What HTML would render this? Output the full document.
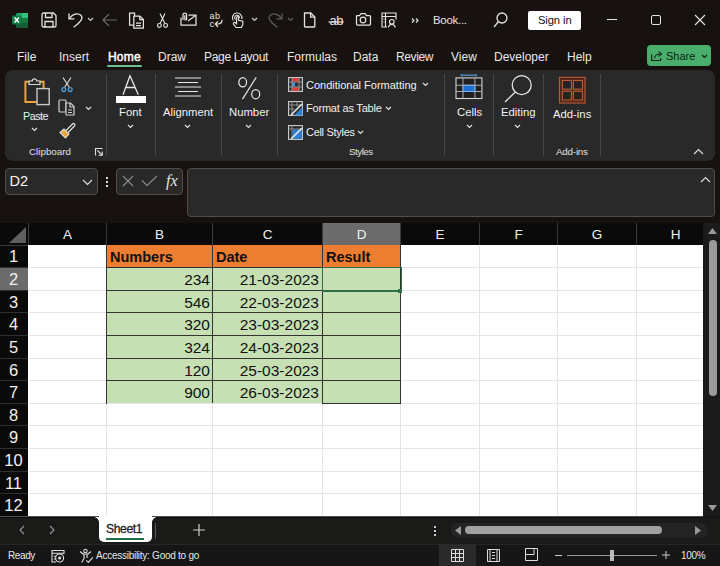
<!DOCTYPE html>
<html><head><meta charset="utf-8">
<style>
*{margin:0;padding:0;box-sizing:border-box}
html,body{width:720px;height:566px;overflow:hidden;background:#17120f;font-family:"Liberation Sans",sans-serif;color:#fff}
.a{position:absolute}
.t{position:absolute;white-space:nowrap;line-height:1}
svg{position:absolute;overflow:visible}
#title{left:0;top:0;width:720px;height:42px;background:#17120f}
.tab{font-size:12px;color:#e8e8e8;top:51px}
#ribbon{left:5px;top:70px;width:710px;height:91px;background:#292929;border-radius:8px}
.sep{position:absolute;width:1px;background:#474747;top:74px;height:82px}
.lbl{font-size:11.3px;color:#f0f0f0}
.glbl{font-size:9.8px;color:#e0e0e0}
.chev{position:absolute}
#fbar{left:0;top:161px;width:720px;height:62px;background:#17120f}
.box{position:absolute;background:#292929;border:1px solid #524c47;border-radius:4px}
#grid{left:0;top:222px;width:703px;height:295px;background:#fff}
.hdr{position:absolute;background:#0a0a0a}
.ch{position:absolute;top:0;height:23px;font-size:14px;color:#f2f2f2;text-align:center;line-height:23px}
.rh{position:absolute;left:0;width:28px;font-size:15px;color:#f2f2f2;text-align:center}
.cell{position:absolute;font-size:15px;color:#111}
</style></head><body>

<!-- TITLE BAR -->
<div id="title" class="a"></div>
<!-- Excel logo -->
<svg style="left:12px;top:12px" width="16" height="16" viewBox="0 0 16 16">
  <rect x="4" y="1" width="12" height="14.5" rx="1.5" fill="#21a366"/>
  <rect x="4" y="5.8" width="12" height="4.8" fill="#107c41"/>
  <path d="M4 10.6h12v3.4a1.5 1.5 0 0 1-1.5 1.5H5.5A1.5 1.5 0 0 1 4 14z" fill="#185c37"/>
  <rect x="10" y="1" width="6" height="4.8" fill="#33c481"/>
  <rect x="0" y="3.5" width="9.5" height="9" rx="1.2" fill="#107c41"/>
  <path d="M2.6 5.6L6.9 10.4M6.9 5.6L2.6 10.4" stroke="#fff" stroke-width="1.5"/>
</svg>
<!-- Save -->
<svg style="left:41px;top:12px" width="16" height="16" viewBox="0 0 16 16" fill="none" stroke="#e4e4e4" stroke-width="1.3">
  <path d="M2.5 1h10l2.5 2.5V13.5a1.5 1.5 0 0 1-1.5 1.5H2.5A1.5 1.5 0 0 1 1 13.5V2.5A1.5 1.5 0 0 1 2.5 1z"/><path d="M4.5 1v4.5h6.5V1"/><path d="M4 15V9.5h8V15"/>
</svg>
<!-- Undo -->
<svg style="left:68px;top:12px" width="16" height="16" viewBox="0 0 16 16" fill="none" stroke="#e4e4e4" stroke-width="1.3" stroke-linecap="round">
  <path d="M1 1.9V6.8H6"/><path d="M1.5 6.3C4.5 2.5 9.5 0.3 12.8 3.2C15.8 6 12.5 10.5 6 15"/>
</svg>
<svg style="left:87px;top:17px" width="7" height="5" viewBox="0 0 7 5" fill="none" stroke="#ccc" stroke-width="1.2"><path d="M1 1l2.5 2.5L6 1"/></svg>
<!-- back arrow gray -->
<svg style="left:102px;top:13px" width="16" height="14" viewBox="0 0 16 14" fill="none" stroke="#6a6a6a" stroke-width="1.2">
  <path d="M1 7h14M7 1L1 7l6 6"/>
</svg>
<!-- copy doc -->
<svg style="left:128px;top:12px" width="17" height="17" viewBox="0 0 17 17" fill="none" stroke="#e4e4e4" stroke-width="1.25">
  <path d="M1.6 1h5v12h-5z"/><path d="M5.8 4h6l3.6 3.6V16H5.8z" fill="#17120f"/><path d="M11.8 4v3.6h3.6M8 11h5M8 13.5h5"/>
</svg>
<!-- scissors -->
<svg style="left:157px;top:13px" width="11" height="15" viewBox="0 0 11 15" fill="none" stroke="#e4e4e4" stroke-width="1.15">
  <path d="M3 0.5L7.8 10.2M8 0.5L3.2 10.2"/><circle cx="2.4" cy="12.4" r="1.9"/><circle cx="8.6" cy="12.4" r="1.9"/>
</svg>
<!-- attach mail -->
<svg style="left:180px;top:12px" width="17" height="14" viewBox="0 0 17 14" fill="none" stroke="#e4e4e4" stroke-width="1.25">
  <path d="M1 5.5V13h15V3H8.5"/><path d="M15.5 3.5L8 9"/><path d="M3 8V2.8a1.8 1.8 0 0 1 3.6 0V7a.9.9 0 0 1-1.8 0V3.2"/>
</svg>
<!-- abc spelling -->
<div class="t" style="left:209.5px;top:11.8px;font-size:9px;color:#e4e4e4;letter-spacing:0.6px">ab</div>
<div class="t" style="left:209.5px;top:18.6px;font-size:9.5px;color:#e4e4e4">c</div>
<svg style="left:214px;top:19px" width="9" height="9" viewBox="0 0 9 9" fill="none" stroke="#e4e4e4" stroke-width="1.2" stroke-linecap="round"><path d="M8 1.2c0 2.5-1.5 3.8-4 3.8H1.4M3.6 2.6L1.3 5l2.3 2.5"/></svg>
<!-- touch -->
<svg style="left:231px;top:12px" width="15" height="17" viewBox="0 0 15 17" fill="none" stroke="#e4e4e4" stroke-width="1.15">
  <path d="M2.2 8.5A4.8 4.8 0 1 1 10.8 7"/><path d="M4.6 7.6A2.4 2.4 0 1 1 8.4 6"/><path d="M5.6 5.5v6.3L4 10.6a1.1 1.1 0 0 0-1.5 1.5L5 15.5h5.5l1.3-3v-3.2l-4.2-1V5.5a1 1 0 0 0-2 0z"/>
</svg>
<svg style="left:251px;top:17px" width="7" height="5" viewBox="0 0 7 5" fill="none" stroke="#ccc" stroke-width="1.2"><path d="M1 1l2.5 2.5L6 1"/></svg>
<!-- redo gray -->
<svg style="left:267px;top:12px" width="16" height="16" viewBox="0 0 16 16" fill="none" stroke="#5c5c5c" stroke-width="1.3" stroke-linecap="round">
  <path d="M15 1.9V6.8H10"/><path d="M14.5 6.3C11.5 2.5 6.5 0.3 3.2 3.2C0.2 6 3.5 10.5 10 15"/>
</svg>
<svg style="left:287px;top:17px" width="7" height="5" viewBox="0 0 7 5" fill="none" stroke="#5c5c5c" stroke-width="1.2"><path d="M1 1l2.5 2.5L6 1"/></svg>
<!-- new doc -->
<svg style="left:303px;top:12px" width="13" height="16" viewBox="0 0 13 16" fill="none" stroke="#e4e4e4" stroke-width="1.3">
  <path d="M1.5 1h6.3l4 4v9.3a.7.7 0 0 1-.7.7H2.2a.7.7 0 0 1-.7-.7z"/><path d="M7.6 1v4.2h4.2"/>
</svg>
<!-- strikethrough ab -->
<div class="t" style="left:329.5px;top:13.7px;font-size:13px;color:#e4e4e4;letter-spacing:-0.4px">ab</div>
<svg style="left:328px;top:20.5px" width="16" height="2" viewBox="0 0 16 2"><path d="M0.5 1h15" stroke="#e4e4e4" stroke-width="1.2"/></svg>
<!-- camera -->
<svg style="left:355px;top:12px" width="16" height="14" viewBox="0 0 16 14" fill="none" stroke="#e4e4e4" stroke-width="1.25">
  <path d="M1.5 3.5h3l1.5-2h4l1.5 2h3a1 1 0 0 1 1 1v7.5a1 1 0 0 1-1 1h-12a1 1 0 0 1-1-1V4.5a1 1 0 0 1 1-1z"/><circle cx="8" cy="8" r="2.8"/>
</svg>
<!-- form -->
<svg style="left:381px;top:12px" width="16" height="16" viewBox="0 0 16 16" fill="none" stroke="#e4e4e4" stroke-width="1.15">
  <path d="M6 15H1V1h14v6.5"/><path d="M1 4.5h14M4.5 1v14M2.5 7h1M2.5 10h1"/><circle cx="10.8" cy="9.8" r="2.3"/><path d="M7.3 15.5c.3-2 1.6-3 3.5-3s3.2 1 3.5 3"/>
</svg>
<svg style="left:411px;top:18px" width="8" height="5" viewBox="0 0 8 5" fill="none" stroke="#e4e4e4" stroke-width="1.2"><path d="M1 0.5l2 2-2 2M5 0.5l2 2-2 2"/></svg>
<div class="t" style="left:433px;top:15px;font-size:11.5px;letter-spacing:-0.3px;color:#e4e4e4">Book...</div>
<!-- search -->
<svg style="left:493px;top:12px" width="15" height="16" viewBox="0 0 15 16" fill="none" stroke="#e4e4e4" stroke-width="1.3">
  <circle cx="9" cy="6" r="5"/><path d="M5.5 9.5L1 15"/>
</svg>
<div class="a" style="left:528px;top:11px;width:53px;height:19px;background:#fff;border-radius:2px"></div>
<div class="t" style="left:538px;top:15px;font-size:11.2px;letter-spacing:-0.1px;color:#111">Sign in</div>
<!-- window controls -->
<div class="a" style="left:607px;top:19px;width:10px;height:1px;background:#e4e4e4"></div>
<div class="a" style="left:651px;top:15px;width:10px;height:10px;border:1.4px solid #e4e4e4;border-radius:2px"></div>
<svg style="left:694px;top:14px" width="12" height="12" viewBox="0 0 12 12" fill="none" stroke="#e4e4e4" stroke-width="1.1"><path d="M1 1l10 10M11 1L1 11"/></svg>

<!-- TABS -->
<div class="t tab" style="left:17px">File</div>
<div class="t tab" style="left:59px">Insert</div>
<div class="t tab" style="left:108px;color:#fff;letter-spacing:0.2px;-webkit-text-stroke:0.45px #fff">Home</div>
<div class="a" style="left:107px;top:64.6px;width:35px;height:2px;background:#6cc193;border-radius:1px"></div>
<div class="t tab" style="left:158px">Draw</div>
<div class="t tab" style="left:204px;letter-spacing:-0.3px">Page Layout</div>
<div class="t tab" style="left:287px">Formulas</div>
<div class="t tab" style="left:353px">Data</div>
<div class="t tab" style="left:396px;letter-spacing:-0.4px">Review</div>
<div class="t tab" style="left:451px">View</div>
<div class="t tab" style="left:494px">Developer</div>
<div class="t tab" style="left:567px">Help</div>
<div class="a" style="left:647px;top:45px;width:64px;height:21px;background:#49ae6b;border-radius:4px"></div>
<svg style="left:651px;top:51px" width="12" height="10" viewBox="0 0 12 10" fill="none" stroke="#0c2616" stroke-width="1.2"><path d="M0.6 3.5v6h9v-2.5"/><path d="M3.5 7.5c0-3 2.5-4.5 5.5-4.5M7.5 0.6l3 2.4-3 2.4"/></svg>
<div class="t" style="left:666px;top:51px;font-size:11px;color:#0c2616">Share</div>
<svg style="left:701px;top:54px" width="7" height="5" viewBox="0 0 7 5" fill="none" stroke="#0c2616" stroke-width="1.2"><path d="M1 1l2.5 2.5L6 1"/></svg>

<!-- RIBBON -->
<div id="ribbon" class="a"></div>
<!-- Clipboard -->
<svg style="left:22px;top:76px" width="30" height="30" viewBox="0 0 30 30" fill="none">
  <path d="M3.4 5.8h18.2v20.2H3.4z" stroke="#eaa43c" stroke-width="2"/>
  <path d="M7 8.5V5h3.3a2.2 2.2 0 0 1 4.4 0H18v3.5z" fill="#292929" stroke="#d8d8d8" stroke-width="1.2"/>
  <rect x="15" y="12.6" width="12.2" height="16" fill="#292929" stroke="#c8c8c8" stroke-width="1.4"/>
</svg>
<div class="t lbl" style="left:23px;top:111px;font-size:10.8px;letter-spacing:-0.5px">Paste</div>
<svg style="left:31px;top:127px" width="7" height="5" viewBox="0 0 7 5" fill="none" stroke="#ddd" stroke-width="1.2"><path d="M1 1l2.5 2.5L6 1"/></svg>
<svg style="left:61px;top:77px" width="12" height="16" viewBox="0 0 12 16" fill="none" stroke-width="1.1">
  <path d="M2 0.5l6.5 10M10 0.5L3.5 10.5" stroke="#e0e0e0"/><circle cx="2.8" cy="12.6" r="1.9" stroke="#4a9ee0" stroke-width="1.3"/><circle cx="9.2" cy="12.6" r="1.9" stroke="#4a9ee0" stroke-width="1.3"/>
</svg>
<svg style="left:58px;top:99px" width="17" height="17" viewBox="0 0 17 17" fill="none" stroke="#d0d0d0" stroke-width="1.2">
  <rect x="1" y="1" width="7" height="12" rx="1.2"/><path d="M8 4h4.5l3.5 3.5V16H8z" fill="#292929"/><path d="M12 4v4h4M10 11h4M10 13.5h4"/>
</svg>
<svg style="left:85px;top:106px" width="7" height="5" viewBox="0 0 7 5" fill="none" stroke="#ddd" stroke-width="1.2"><path d="M1 1l2.5 2.5L6 1"/></svg>
<svg style="left:59px;top:123px" width="16" height="16" viewBox="0 0 16 16" fill="none">
  <path d="M1 9.5l4-3.5 5 5-3.5 4z" fill="#eaa43c" stroke="#e0e0e0" stroke-width="1.1"/>
  <path d="M7 7.5l6.5-6.5a1.3 1.3 0 0 1 2 2L9 9.5" stroke="#e0e0e0" stroke-width="1.2"/>
</svg>
<div class="t glbl" style="left:29px;top:146.5px">Clipboard</div>
<svg style="left:95px;top:148px" width="8" height="8" viewBox="0 0 8 8" fill="none" stroke="#ddd" stroke-width="1.1"><path d="M0.5 7.5V0.5h7"/><path d="M2.5 2.5l4.5 4.5M7.3 3.5v3.8H3.5"/></svg>
<div class="sep" style="left:106px"></div>

<!-- Font -->
<svg style="left:116px;top:74px" width="30" height="30" viewBox="0 0 30 30" fill="none" stroke="#e6e6e6" stroke-width="1.3">
  <path d="M7 20.7L14 1.8l8.3 18.9M10 13.5h9"/>
</svg>
<div class="a" style="left:116px;top:96px;width:30px;height:7px;background:#fff"></div>
<div class="t lbl" style="left:119px;top:107px">Font</div>
<svg style="left:127px;top:124px" width="7" height="5" viewBox="0 0 7 5" fill="none" stroke="#ddd" stroke-width="1.2"><path d="M1 1l2.5 2.5L6 1"/></svg>
<div class="sep" style="left:155px"></div>

<!-- Alignment -->
<svg style="left:174px;top:77px" width="28" height="21" viewBox="0 0 28 21" fill="none" stroke="#e6e6e6" stroke-width="1.2">
  <path d="M1 1h26M4 5.5h20M1 10h26M4 14.5h20M1 19h26"/>
</svg>
<div class="t lbl" style="left:163px;top:107px">Alignment</div>
<svg style="left:184px;top:124px" width="7" height="5" viewBox="0 0 7 5" fill="none" stroke="#ddd" stroke-width="1.2"><path d="M1 1l2.5 2.5L6 1"/></svg>
<div class="sep" style="left:221px"></div>

<!-- Number -->
<svg style="left:237px;top:76px" width="24" height="25" viewBox="0 0 24 25" fill="none" stroke="#e6e6e6" stroke-width="1.25"><ellipse cx="5.7" cy="6.3" rx="3.9" ry="4.6"/><ellipse cx="18.7" cy="18.2" rx="4" ry="4.6"/><path d="M19.25 1.3L5.5 23.2"/></svg>
<div class="t lbl" style="left:229px;top:107px">Number</div>
<svg style="left:245px;top:124px" width="7" height="5" viewBox="0 0 7 5" fill="none" stroke="#ddd" stroke-width="1.2"><path d="M1 1l2.5 2.5L6 1"/></svg>
<div class="sep" style="left:277px"></div>

<!-- Styles -->
<svg style="left:288px;top:77px" width="15" height="15" viewBox="0 0 15 15">
  <rect x="0.6" y="0.6" width="13.8" height="13.8" fill="#2f2f2f" stroke="#d0d0d0" stroke-width="1.1"/>
  <rect x="4" y="1" width="7" height="3.6" fill="#e03a3a"/><rect x="4" y="10.4" width="7" height="3.6" fill="#e03a3a"/>
  <rect x="4" y="5.4" width="3" height="4.2" fill="#3b8fe0"/>
  <path d="M4 0.6v13.8M11 0.6v13.8M0.6 5h13.8M0.6 10h13.8" stroke="#9a9a9a" stroke-width="0.9"/>
</svg>
<div class="t lbl" style="left:306px;top:80px;font-size:11px">Conditional Formatting</div>
<svg style="left:422px;top:82px" width="7" height="5" viewBox="0 0 7 5" fill="none" stroke="#ddd" stroke-width="1.2"><path d="M1 1l2.5 2.5L6 1"/></svg>
<svg style="left:288px;top:101px" width="15" height="15" viewBox="0 0 15 15">
  <rect x="0.6" y="0.6" width="13.8" height="13.8" fill="none" stroke="#d0d0d0" stroke-width="1.1"/>
  <path d="M4 0.6v13.8M9 0.6v5M0.6 4h13.8M0.6 8h6" stroke="#9a9a9a" stroke-width="0.9"/>
  <path d="M6 14.4L14.4 6v8.4z" fill="#2f7fd0"/><path d="M3.5 13.5L13.5 3.5" stroke="#e6e6e6" stroke-width="1.6" stroke-linecap="round"/>
</svg>
<div class="t lbl" style="left:306px;top:103px;font-size:11px;letter-spacing:-0.2px">Format as Table</div>
<svg style="left:385px;top:106px" width="7" height="5" viewBox="0 0 7 5" fill="none" stroke="#ddd" stroke-width="1.2"><path d="M1 1l2.5 2.5L6 1"/></svg>
<svg style="left:288px;top:125px" width="15" height="15" viewBox="0 0 15 15">
  <rect x="0.6" y="0.6" width="13.8" height="13.8" fill="none" stroke="#d0d0d0" stroke-width="1.1"/>
  <path d="M0.6 4h13.8M4 0.6v13.8" stroke="#9a9a9a" stroke-width="0.9"/>
  <rect x="4.5" y="4.5" width="9.4" height="9.4" fill="#2f7fd0"/><path d="M3.5 13.5L13.5 3.5" stroke="#e6e6e6" stroke-width="1.6" stroke-linecap="round"/>
</svg>
<div class="t lbl" style="left:306px;top:127px;font-size:11px;letter-spacing:-0.3px">Cell Styles</div>
<svg style="left:357px;top:130px" width="7" height="5" viewBox="0 0 7 5" fill="none" stroke="#ddd" stroke-width="1.2"><path d="M1 1l2.5 2.5L6 1"/></svg>
<div class="t glbl" style="left:349px;top:147px;letter-spacing:-0.5px">Styles</div>
<div class="sep" style="left:444px"></div>

<!-- Cells -->
<svg style="left:455px;top:74px" width="28" height="26" viewBox="0 0 28 26">
  <path d="M6.6 1.2h14.4M6.6 0v2.4M21 0v2.4" stroke="#4d86b8" stroke-width="1.6"/>
  <rect x="1" y="3.9" width="25.9" height="20.6" fill="#202020" stroke="#d8d8d8" stroke-width="1.1"/>
  <path d="M8 3.9v20.6M19.9 3.9v20.6M1 11.25h25.9M1 17.5h25.9" stroke="#a8a8a8" stroke-width="1"/>
  <rect x="8.5" y="11.75" width="10.9" height="5.25" fill="#1f6fd0"/>
  <path d="M8 11.25h11.9M8 17.5h11.9M8 11.25v6.25M19.9 11.25v6.25" stroke="#7ab8f0" stroke-width="1"/>
</svg>
<div class="t lbl" style="left:457px;top:107px">Cells</div>
<svg style="left:466px;top:124px" width="7" height="5" viewBox="0 0 7 5" fill="none" stroke="#ddd" stroke-width="1.2"><path d="M1 1l2.5 2.5L6 1"/></svg>
<div class="sep" style="left:493px"></div>

<!-- Editing -->
<svg style="left:503px;top:74px" width="30" height="30" viewBox="0 0 30 30" fill="none" stroke="#e6e6e6" stroke-width="1.3">
  <circle cx="18.7" cy="11.1" r="9.5"/><path d="M12 18.2L2 28"/>
</svg>
<div class="t lbl" style="left:501px;top:107px">Editing</div>
<svg style="left:514px;top:124px" width="7" height="5" viewBox="0 0 7 5" fill="none" stroke="#ddd" stroke-width="1.2"><path d="M1 1l2.5 2.5L6 1"/></svg>
<div class="sep" style="left:543px"></div>

<!-- Add-ins -->
<svg style="left:558px;top:76px" width="28" height="28" viewBox="0 0 28 28" stroke="#c05a35" stroke-width="1.1">
  <rect x="1.5" y="1.3" width="25.5" height="25.7" fill="#4e2619"/>
  <rect x="4.4" y="4.5" width="9" height="8.7" fill="#262220"/><rect x="15.4" y="4.5" width="9" height="8.7" fill="#262220"/>
  <rect x="4.4" y="15.3" width="9" height="8.7" fill="#262220"/><rect x="15.4" y="15.3" width="9" height="8.7" fill="#262220"/>
</svg>
<div class="t lbl" style="left:553px;top:109px">Add-ins</div>
<div class="t glbl" style="left:556px;top:147px;letter-spacing:-0.2px">Add-ins</div>
<div class="sep" style="left:600px"></div>
<svg style="left:693px;top:148px" width="11" height="7" viewBox="0 0 11 7" fill="none" stroke="#ddd" stroke-width="1.2"><path d="M1 6l4.5-4.5L10 6"/></svg>

<!-- FORMULA BAR -->
<div class="box" style="left:5px;top:168px;width:93px;height:27px"></div>
<div class="t" style="left:9.5px;top:174px;font-size:14.6px;color:#f4f4f4">D2</div>
<svg style="left:82px;top:179px" width="11" height="7" viewBox="0 0 11 7" fill="none" stroke="#ddd" stroke-width="1.2"><path d="M1 1l4.5 4.5L10 1"/></svg>
<div class="a" style="left:106px;top:177px;width:2px;height:2px;background:#ddd"></div>
<div class="a" style="left:106px;top:181px;width:2px;height:2px;background:#ddd"></div>
<div class="a" style="left:106px;top:185px;width:2px;height:2px;background:#ddd"></div>
<div class="box" style="left:116px;top:168px;width:67px;height:27px"></div>
<svg style="left:122px;top:175px" width="12" height="12" viewBox="0 0 12 12" fill="none" stroke="#8a8a8a" stroke-width="1.2"><path d="M1 1l10 10M11 1L1 11"/></svg>
<svg style="left:141px;top:175px" width="17" height="12" viewBox="0 0 17 12" fill="none" stroke="#8a8a8a" stroke-width="1.2"><path d="M1 5.5l5 5 10-9.5"/></svg>
<div class="t" style="left:166px;top:173px;font-size:16px;color:#e6e6e6;font-family:'Liberation Serif',serif;font-style:italic">fx</div>
<div class="box" style="left:187px;top:168px;width:528px;height:49px"></div>
<svg style="left:700px;top:176px" width="11" height="7" viewBox="0 0 11 7" fill="none" stroke="#ddd" stroke-width="1.2"><path d="M1 6l4.5-4.5L10 6"/></svg>

<!-- GRID -->
<div class="a" style="left:28px;top:245px;width:675px;height:271px;background:#fff"></div>
<div class="a" style="left:0;top:223px;width:703px;height:22px;background:#0a0a0a"></div>
<div class="a" style="left:0;top:245px;width:28px;height:271px;background:#0a0a0a"></div>
<svg style="left:9px;top:227px" width="17" height="16" viewBox="0 0 17 16"><path d="M17 0V16H0z" fill="#5f5f5f"/></svg>
<div class="a" style="left:28px;top:223px;width:1px;height:22px;background:#3a3a3a"></div>
<div class="t" style="left:29px;top:228px;width:77px;text-align:center;font-size:13.5px;color:#f0f0f0">A</div>
<div class="a" style="left:106px;top:223px;width:1px;height:22px;background:#3a3a3a"></div>
<div class="t" style="left:107px;top:228px;width:105px;text-align:center;font-size:13.5px;color:#f0f0f0">B</div>
<div class="a" style="left:212px;top:223px;width:1px;height:22px;background:#3a3a3a"></div>
<div class="t" style="left:213px;top:228px;width:109px;text-align:center;font-size:13.5px;color:#f0f0f0">C</div>
<div class="a" style="left:323px;top:223px;width:78px;height:22px;background:#6b6b6b"></div>
<div class="a" style="left:322px;top:223px;width:1px;height:22px;background:#3a3a3a"></div>
<div class="t" style="left:323px;top:228px;width:77px;text-align:center;font-size:13.5px;color:#f0f0f0">D</div>
<div class="a" style="left:400px;top:223px;width:1px;height:22px;background:#3a3a3a"></div>
<div class="t" style="left:401px;top:228px;width:78px;text-align:center;font-size:13.5px;color:#f0f0f0">E</div>
<div class="a" style="left:479px;top:223px;width:1px;height:22px;background:#3a3a3a"></div>
<div class="t" style="left:480px;top:228px;width:77px;text-align:center;font-size:13.5px;color:#f0f0f0">F</div>
<div class="a" style="left:557px;top:223px;width:1px;height:22px;background:#3a3a3a"></div>
<div class="t" style="left:558px;top:228px;width:78px;text-align:center;font-size:13.5px;color:#f0f0f0">G</div>
<div class="a" style="left:636px;top:223px;width:1px;height:22px;background:#3a3a3a"></div>
<div class="t" style="left:637px;top:228px;width:77px;text-align:center;font-size:13.5px;color:#f0f0f0">H</div>
<div class="a" style="left:106px;top:245px;width:1px;height:271px;background:#e4e4e4"></div>
<div class="a" style="left:212px;top:245px;width:1px;height:271px;background:#e4e4e4"></div>
<div class="a" style="left:322px;top:245px;width:1px;height:271px;background:#e4e4e4"></div>
<div class="a" style="left:400px;top:245px;width:1px;height:271px;background:#e4e4e4"></div>
<div class="a" style="left:479px;top:245px;width:1px;height:271px;background:#e4e4e4"></div>
<div class="a" style="left:557px;top:245px;width:1px;height:271px;background:#e4e4e4"></div>
<div class="a" style="left:636px;top:245px;width:1px;height:271px;background:#e4e4e4"></div>
<div class="a" style="left:29px;top:267px;width:674px;height:1px;background:#e4e4e4"></div>
<div class="a" style="left:29px;top:290px;width:674px;height:1px;background:#e4e4e4"></div>
<div class="a" style="left:29px;top:312px;width:674px;height:1px;background:#e4e4e4"></div>
<div class="a" style="left:29px;top:335px;width:674px;height:1px;background:#e4e4e4"></div>
<div class="a" style="left:29px;top:358px;width:674px;height:1px;background:#e4e4e4"></div>
<div class="a" style="left:29px;top:380px;width:674px;height:1px;background:#e4e4e4"></div>
<div class="a" style="left:29px;top:403px;width:674px;height:1px;background:#e4e4e4"></div>
<div class="a" style="left:29px;top:425px;width:674px;height:1px;background:#e4e4e4"></div>
<div class="a" style="left:29px;top:448px;width:674px;height:1px;background:#e4e4e4"></div>
<div class="a" style="left:29px;top:471px;width:674px;height:1px;background:#e4e4e4"></div>
<div class="a" style="left:29px;top:493px;width:674px;height:1px;background:#e4e4e4"></div>
<div class="a" style="left:0;top:245px;width:28px;height:1px;background:#3a3a3a"></div>
<div class="a" style="left:0;top:267px;width:28px;height:1px;background:#2e2e2e"></div>
<div class="t" style="left:0;top:248px;width:27px;text-align:center;font-size:16.5px;color:#f0f0f0">1</div>
<div class="a" style="left:0;top:268px;width:28px;height:23px;background:#6b6b6b"></div>
<div class="a" style="left:0;top:290px;width:28px;height:1px;background:#2e2e2e"></div>
<div class="t" style="left:0;top:271px;width:27px;text-align:center;font-size:16.5px;color:#f0f0f0">2</div>
<div class="a" style="left:0;top:312px;width:28px;height:1px;background:#2e2e2e"></div>
<div class="t" style="left:0;top:294px;width:27px;text-align:center;font-size:16.5px;color:#f0f0f0">3</div>
<div class="a" style="left:0;top:335px;width:28px;height:1px;background:#2e2e2e"></div>
<div class="t" style="left:0;top:316px;width:27px;text-align:center;font-size:16.5px;color:#f0f0f0">4</div>
<div class="a" style="left:0;top:358px;width:28px;height:1px;background:#2e2e2e"></div>
<div class="t" style="left:0;top:339px;width:27px;text-align:center;font-size:16.5px;color:#f0f0f0">5</div>
<div class="a" style="left:0;top:380px;width:28px;height:1px;background:#2e2e2e"></div>
<div class="t" style="left:0;top:362px;width:27px;text-align:center;font-size:16.5px;color:#f0f0f0">6</div>
<div class="a" style="left:0;top:403px;width:28px;height:1px;background:#2e2e2e"></div>
<div class="t" style="left:0;top:384px;width:27px;text-align:center;font-size:16.5px;color:#f0f0f0">7</div>
<div class="a" style="left:0;top:425px;width:28px;height:1px;background:#2e2e2e"></div>
<div class="t" style="left:0;top:407px;width:27px;text-align:center;font-size:16.5px;color:#f0f0f0">8</div>
<div class="a" style="left:0;top:448px;width:28px;height:1px;background:#2e2e2e"></div>
<div class="t" style="left:0;top:429px;width:27px;text-align:center;font-size:16.5px;color:#f0f0f0">9</div>
<div class="a" style="left:0;top:471px;width:28px;height:1px;background:#2e2e2e"></div>
<div class="t" style="left:0;top:452px;width:27px;text-align:center;font-size:16.5px;color:#f0f0f0">10</div>
<div class="a" style="left:0;top:493px;width:28px;height:1px;background:#2e2e2e"></div>
<div class="t" style="left:0;top:475px;width:27px;text-align:center;font-size:16.5px;color:#f0f0f0">11</div>
<div class="a" style="left:0;top:516px;width:28px;height:1px;background:#2e2e2e"></div>
<div class="t" style="left:0;top:497px;width:27px;text-align:center;font-size:16.5px;color:#f0f0f0">12</div>
<div class="a" style="left:106px;top:245px;width:295px;height:22px;background:#ed7d31"></div>
<div class="a" style="left:106px;top:267px;width:295px;height:136px;background:#c6e0b4"></div>
<div class="a" style="left:106px;top:245px;width:1px;height:159px;background:#333"></div>
<div class="a" style="left:212px;top:245px;width:1px;height:159px;background:#333"></div>
<div class="a" style="left:322px;top:245px;width:1px;height:159px;background:#333"></div>
<div class="a" style="left:400px;top:245px;width:1px;height:159px;background:#333"></div>
<div class="a" style="left:106px;top:267px;width:295px;height:1px;background:#333"></div>
<div class="a" style="left:106px;top:290px;width:295px;height:1px;background:#333"></div>
<div class="a" style="left:106px;top:312px;width:295px;height:1px;background:#333"></div>
<div class="a" style="left:106px;top:335px;width:295px;height:1px;background:#333"></div>
<div class="a" style="left:106px;top:358px;width:295px;height:1px;background:#333"></div>
<div class="a" style="left:106px;top:380px;width:295px;height:1px;background:#333"></div>
<div class="a" style="left:107px;top:403px;width:215px;height:1px;background:#e4e4e4"></div>
<div class="a" style="left:322px;top:403px;width:79px;height:1px;background:#333"></div>
<div class="t" style="left:110px;top:250px;font-size:14.5px;font-weight:bold;color:#111">Numbers</div>
<div class="t" style="left:216px;top:250px;font-size:14.5px;font-weight:bold;color:#111">Date</div>
<div class="t" style="left:326px;top:250px;font-size:14.5px;font-weight:bold;color:#111">Result</div>
<div class="t" style="left:106px;top:272px;width:104px;text-align:right;font-size:15.5px;color:#111">234</div>
<div class="t" style="left:212px;top:272px;width:107px;text-align:right;font-size:15.5px;color:#111">21-03-2023</div>
<div class="t" style="left:106px;top:295px;width:104px;text-align:right;font-size:15.5px;color:#111">546</div>
<div class="t" style="left:212px;top:295px;width:107px;text-align:right;font-size:15.5px;color:#111">22-03-2023</div>
<div class="t" style="left:106px;top:317px;width:104px;text-align:right;font-size:15.5px;color:#111">320</div>
<div class="t" style="left:212px;top:317px;width:107px;text-align:right;font-size:15.5px;color:#111">23-03-2023</div>
<div class="t" style="left:106px;top:340px;width:104px;text-align:right;font-size:15.5px;color:#111">324</div>
<div class="t" style="left:212px;top:340px;width:107px;text-align:right;font-size:15.5px;color:#111">24-03-2023</div>
<div class="t" style="left:106px;top:363px;width:104px;text-align:right;font-size:15.5px;color:#111">120</div>
<div class="t" style="left:212px;top:363px;width:107px;text-align:right;font-size:15.5px;color:#111">25-03-2023</div>
<div class="t" style="left:106px;top:385px;width:104px;text-align:right;font-size:15.5px;color:#111">900</div>
<div class="t" style="left:212px;top:385px;width:107px;text-align:right;font-size:15.5px;color:#111">26-03-2023</div>
<div class="a" style="left:322px;top:267px;width:80px;height:25px;border:1px solid #2f6f48;border-bottom-width:2px"></div>
<div class="a" style="left:398px;top:289px;width:4px;height:4px;background:#2f6f48"></div>
<div class="a" style="left:0;top:516px;width:703px;height:1px;background:#505050"></div>
<div class="a" style="left:703px;top:223px;width:17px;height:293px;background:#1b1b1b"></div>
<svg style="left:708px;top:228px" width="9" height="6" viewBox="0 0 9 6"><path d="M0 6L4.5 0 9 6z" fill="#9a9a9a"/></svg>
<div class="a" style="left:709px;top:240px;width:8px;height:156px;background:#9a9a9a;border-radius:4px"></div>
<svg style="left:708px;top:505px" width="9" height="6" viewBox="0 0 9 6"><path d="M0 0l4.5 6L9 0z" fill="#9a9a9a"/></svg>
<!-- BOTTOM -->
<div class="a" style="left:0;top:517px;width:720px;height:27px;background:#1a1a18"></div><div class="a" style="left:0;top:517px;width:703px;height:1px;background:#0d0d0d"></div>
<svg style="left:19px;top:525px" width="6" height="10" viewBox="0 0 6 10" fill="none" stroke="#999" stroke-width="1.1"><path d="M5 1L1 5l4 4"/></svg>
<svg style="left:49px;top:525px" width="6" height="10" viewBox="0 0 6 10" fill="none" stroke="#999" stroke-width="1.1"><path d="M1 1l4 4-4 4"/></svg>
<div class="a" style="left:99px;top:516px;width:53px;height:26px;background:#fff;border-radius:0 0 5px 5px"></div>
<div class="a" style="left:94px;top:517px;width:5px;height:5px;background:radial-gradient(circle at 0 100%,transparent 4.5px,#fff 5px)"></div>
<div class="a" style="left:152px;top:517px;width:5px;height:5px;background:radial-gradient(circle at 100% 100%,transparent 4.5px,#fff 5px)"></div>
<div class="t" style="left:106px;top:523px;font-size:12.2px;letter-spacing:-0.4px;color:#222;-webkit-text-stroke:0.3px #222">Sheet1</div>
<div class="a" style="left:106px;top:538px;width:38px;height:2px;background:#1e7145"></div>
<div class="a" style="left:155px;top:523px;width:1px;height:16px;background:#555"></div>
<svg style="left:193px;top:524px" width="12" height="12" viewBox="0 0 12 12" fill="none" stroke="#ccc" stroke-width="1.2"><path d="M6 0v12M0 6h12"/></svg>
<div class="a" style="left:434px;top:526px;width:2px;height:2px;background:#ccc"></div>
<div class="a" style="left:434px;top:530px;width:2px;height:2px;background:#ccc"></div>
<div class="a" style="left:434px;top:534px;width:2px;height:2px;background:#ccc"></div>
<div class="a" style="left:451px;top:523px;width:257px;height:15px;background:#242424;border-radius:7px"></div>
<svg style="left:455px;top:526px" width="6" height="9" viewBox="0 0 6 9"><path d="M6 0v9L0 4.5z" fill="#999"/></svg>
<svg style="left:695px;top:526px" width="6" height="9" viewBox="0 0 6 9"><path d="M0 0v9l6-4.5z" fill="#999"/></svg>
<div class="a" style="left:465px;top:526px;width:197px;height:8px;background:#a0a0a0;border-radius:4px"></div>
<div class="a" style="left:0;top:544px;width:720px;height:22px;background:#161616"></div><div class="a" style="left:0;top:544px;width:720px;height:1px;background:#262624"></div>
<div class="t" style="left:8px;top:551px;font-size:10px;letter-spacing:-0.4px;color:#e6e6e6">Ready</div>
<svg style="left:51px;top:549px" width="15" height="15" viewBox="0 0 15 15" fill="none" stroke="#e0e0e0" stroke-width="1.1"><path d="M5 13H1V1.5h12V5"/><path d="M1 4.3h12M2.8 7.3h2.4M2.8 10h2.4"/><circle cx="8.6" cy="9" r="4" fill="#161616"/><circle cx="8.6" cy="9" r="1.5" fill="#e0e0e0" stroke="none"/></svg>
<svg style="left:79px;top:548px" width="15" height="16" viewBox="0 0 15 16" fill="none" stroke="#e0e0e0" stroke-width="1.1" stroke-linejoin="round"><circle cx="6.4" cy="3" r="1.7"/><path d="M1 3.5l3 2.5h5l3-2.5M5 6.5v4l-2.3 4M8 6.5v3.5M7.3 12.3l2 2 4.6-5"/></svg>
<div class="t" style="left:96px;top:551px;font-size:10px;letter-spacing:-0.26px;color:#e6e6e6">Accessibility: Good to go</div>
<div class="a" style="left:439px;top:544px;width:37px;height:22px;background:#2a2a2a"></div>
<svg style="left:451px;top:549px" width="13" height="13" viewBox="0 0 13 13" fill="none" stroke="#ddd" stroke-width="1"><path d="M.5 .5h12v12H.5zM.5 4.5h12M.5 8.5h12M4.5 .5v12M8.5 .5v12"/></svg>
<svg style="left:487px;top:549px" width="13" height="13" viewBox="0 0 13 13" fill="none" stroke="#ddd" stroke-width="1"><path d="M.5 .5h12v12H.5zM3 .5v12M10 .5v12M5 3.5h3M5 6.5h3M5 9.5h3"/></svg>
<svg style="left:525px;top:548px" width="13" height="13" viewBox="0 0 13 13" fill="none" stroke="#ddd" stroke-width="1"><path d="M.5 .5h12v12H.5zM9 .5v6H.5"/></svg>
<div class="a" style="left:555px;top:555px;width:7px;height:1px;background:#ccc"></div>
<div class="a" style="left:567px;top:555px;width:90px;height:1px;background:#999"></div>
<div class="a" style="left:610px;top:550px;width:4px;height:11px;background:#bbb"></div>
<svg style="left:662px;top:551px" width="8" height="8" viewBox="0 0 8 8" fill="none" stroke="#ccc" stroke-width="1"><path d="M4 0v8M0 4h8"/></svg>
<div class="t" style="left:681px;top:551px;font-size:10px;letter-spacing:-0.3px;color:#e6e6e6">100%</div>
</body></html>
